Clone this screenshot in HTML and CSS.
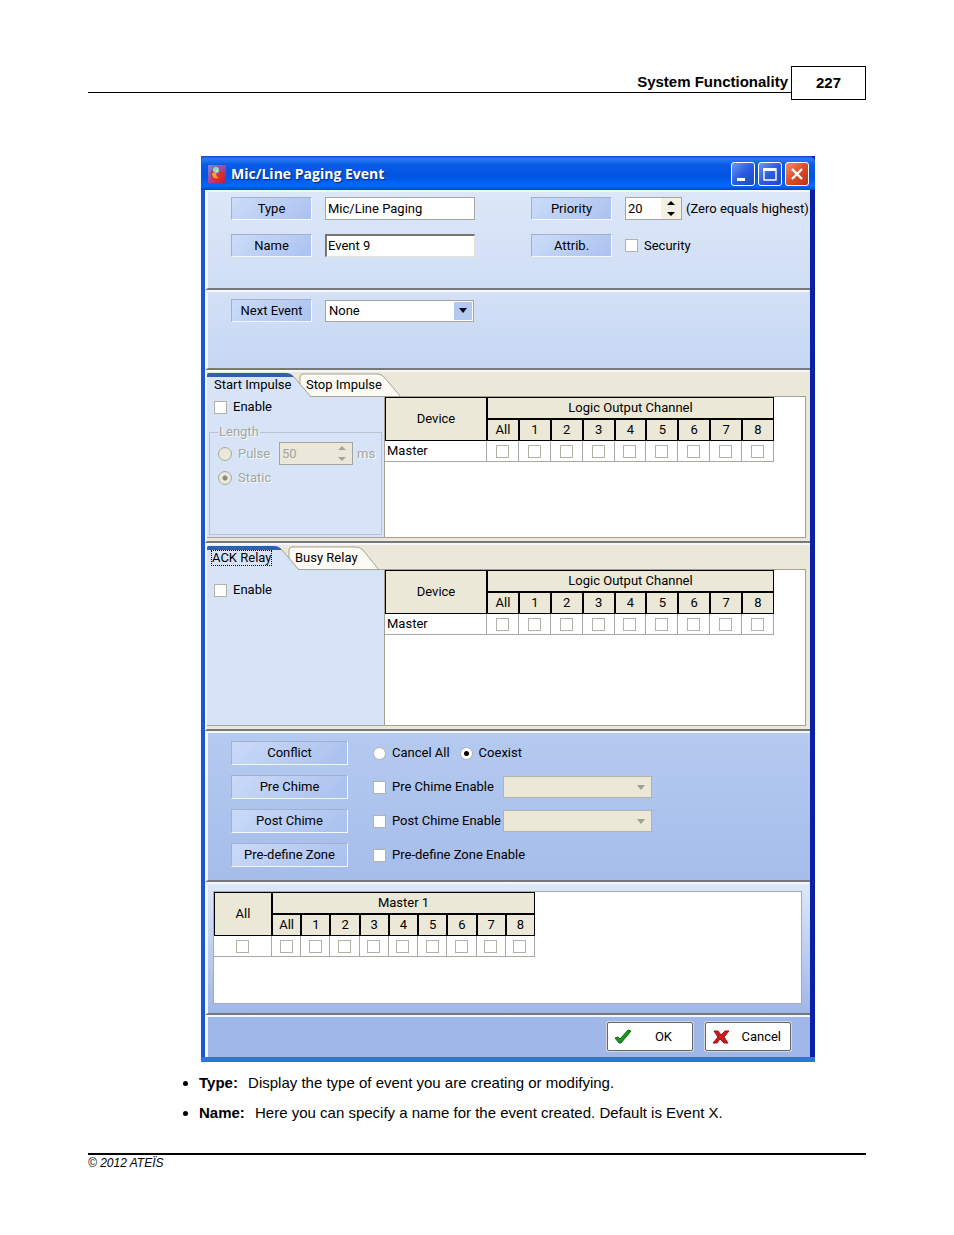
FILE: index.html
```
<!DOCTYPE html>
<html lang="en">
<head>
    <meta charset="UTF-8">
    <title>System Functionality - 227</title>
    <link rel="stylesheet" href="styles.css">
</head>
<body>
    <div class="page">
        <header class="page-header">
            <div class="chapter">System Functionality</div>
            <div class="page-number">227</div>
        </header>

        <main class="content">
            <div class="window">
                <div class="title-bar">
                    <svg class="app-icon" width="18" height="18" viewBox="0 0 18 18">
                        <defs>
                            <linearGradient id="icon-bg" x1="0" y1="0" x2="1" y2="1">
                                <stop offset="0" stop-color="#6a8ee0"/>
                                <stop offset="0.5" stop-color="#a0489a"/>
                                <stop offset="1" stop-color="#c01c20"/>
                            </linearGradient>
                        </defs>
                        <rect width="18" height="18" fill="url(#icon-bg)"/>
                        <path d="M3 5 Q2 16 8 16 Q16 16 16 7 L12 7 Q12 11 9 10 Z" fill="#e8281c"/>
                        <path d="M4 8 Q4 15 11 13 Q8 12 8 8 Z" fill="#f8a030"/>
                        <circle cx="8" cy="5" r="3" fill="#8fd8c0"/>
                        <circle cx="9" cy="6" r="1" fill="#f4e860"/>
                    </svg>
                    <span class="window-title">Mic/Line Paging Event</span>
                    <button class="win-btn" aria-label="Minimize">
                        <svg width="22" height="22" viewBox="0 0 22 22"><rect x="5" y="15" width="8" height="3" fill="#fff"/></svg>
                    </button>
                    <button class="win-btn" aria-label="Maximize">
                        <svg width="22" height="22" viewBox="0 0 22 22"><path d="M5 6 H17 V17 H5 Z" fill="none" stroke="#fff" stroke-width="1.4"/><rect x="4" y="5" width="13" height="3" fill="#fff"/></svg>
                    </button>
                    <button class="win-btn close" aria-label="Close">
                        <svg width="22" height="22" viewBox="0 0 22 22"><path d="M6 6 L16 16 M16 6 L6 16" stroke="#fff" stroke-width="2.4"/></svg>
                    </button>
                </div>

                <!-- Type, name, priority -->
                <section class="section general">
                    <div class="field">
                        <label class="tag" for="type">Type</label>
                        <input class="text" id="type" type="text" value="Mic/Line Paging" readonly>
                    </div>
                    <div class="field">
                        <label class="tag" for="priority">Priority</label>
                        <span class="spinner">
                            <input id="priority" type="text" value="20">
                            <span class="spin-buttons">
                                <button aria-label="Increase"><svg width="8" height="4" viewBox="0 0 8 4"><path d="M0 4 L4 0 L8 4 Z"/></svg></button>
                                <button aria-label="Decrease"><svg width="8" height="4" viewBox="0 0 8 4"><path d="M0 0 L4 4 L8 0 Z"/></svg></button>
                            </span>
                        </span>
                        <span class="hint">(Zero equals highest)</span>
                    </div>
                    <div class="field">
                        <label class="tag" for="name">Name</label>
                        <input class="text sunken" id="name" type="text" value="Event 9">
                    </div>
                    <div class="field">
                        <span class="tag">Attrib.</span>
                        <label class="check"><input type="checkbox">Security</label>
                    </div>
                </section>

                <section class="section next">
                    <div class="field">
                        <label class="tag" for="next-event">Next Event</label>
                        <span class="combo">
                            <select id="next-event"><option>None</option></select>
                            <span class="arrow"><svg width="8" height="5" viewBox="0 0 8 5"><path d="M0 0 L4 5 L8 0 Z"/></svg></span>
                        </span>
                    </div>
                </section>

                <!-- Impulse tabs -->
                <section class="section tabbed">
                    <div class="tabs" role="tablist">
                        <button class="tab active" role="tab" aria-selected="true">
                            <svg width="104" height="24" viewBox="0 0 104 24"><path d="M0 24 V2 Q0 0 2 0 H79 Q84 0 87 4 L104 24 Z" fill="#d7e4f7"/><path d="M0 4 V2 Q0 0 2 0 H79 Q84 0 87 4 Z" fill="#2f5fb0"/><path d="M87 4 L104 24" stroke="#a5a295" fill="none"/></svg>
                            <span>Start Impulse</span>
                        </button>
                        <button class="tab" role="tab" aria-selected="false">
                            <svg width="104" height="24" viewBox="0 0 104 24"><path d="M1 11 V4 Q1 1 4 1 H78 Q82 1 85 4 L102 23 H11 Z" fill="#fbfaf4"/><path d="M1 13 V4 Q1 1 4 1 H78 Q82 1 85 4 L102 24" stroke="#a5a295" fill="none"/></svg>
                            <span>Stop Impulse</span>
                        </button>
                    </div>
                    <div class="tab-body">
                        <div class="options">
                            <label class="check"><input type="checkbox">Enable</label>
                            <fieldset disabled>
                                <legend>Length</legend>
                                <div class="pulse-row">
                                    <label class="check"><input type="radio" name="length">Pulse</label>
                                    <span class="spinner">
                                        <input type="text" value="50" aria-label="Pulse length">
                                        <span class="spin-buttons">
                                            <button aria-label="Increase"><svg width="8" height="4" viewBox="0 0 8 4"><path d="M0 4 L4 0 L8 4 Z"/></svg></button>
                                            <button aria-label="Decrease"><svg width="8" height="4" viewBox="0 0 8 4"><path d="M0 0 L4 4 L8 0 Z"/></svg></button>
                                        </span>
                                    </span>
                                    <span>ms</span>
                                </div>
                                <label class="check"><input type="radio" name="length" checked>Static</label>
                            </fieldset>
                        </div>
                        <div class="grid-pane">
                            <table class="channels">
                                <thead>
                                    <tr><th class="device" rowspan="2">Device</th><th colspan="9">Logic Output Channel</th></tr>
                                    <tr><th>All</th><th>1</th><th>2</th><th>3</th><th>4</th><th>5</th><th>6</th><th>7</th><th>8</th></tr>
                                </thead>
                                <tbody>
                                    <tr>
                                        <td class="row-name">Master</td>
                                        <td><input type="checkbox" aria-label="All"></td>
                                        <td><input type="checkbox" aria-label="1"></td>
                                        <td><input type="checkbox" aria-label="2"></td>
                                        <td><input type="checkbox" aria-label="3"></td>
                                        <td><input type="checkbox" aria-label="4"></td>
                                        <td><input type="checkbox" aria-label="5"></td>
                                        <td><input type="checkbox" aria-label="6"></td>
                                        <td><input type="checkbox" aria-label="7"></td>
                                        <td><input type="checkbox" aria-label="8"></td>
                                    </tr>
                                </tbody>
                            </table>
                        </div>
                    </div>
                </section>

                <!-- Relay tabs -->
                <section class="section tabbed relay">
                    <div class="tabs" role="tablist">
                        <button class="tab active focused" role="tab" aria-selected="true">
                            <svg width="93" height="24" viewBox="0 0 93 24"><path d="M0 24 V2 Q0 0 2 0 H67 Q72 0 75 4 L92 24 Z" fill="#d7e4f7"/><path d="M0 4 V2 Q0 0 2 0 H67 Q72 0 75 4 Z" fill="#2f5fb0"/><path d="M75 4 L92 24" stroke="#a5a295" fill="none"/></svg>
                            <span>ACK Relay</span>
                        </button>
                        <button class="tab" role="tab" aria-selected="false">
                            <svg width="93" height="24" viewBox="0 0 93 24"><path d="M1 11 V4 Q1 1 4 1 H68 Q72 1 75 4 L91 23 H11 Z" fill="#fbfaf4"/><path d="M1 13 V4 Q1 1 4 1 H68 Q72 1 75 4 L91 24" stroke="#a5a295" fill="none"/></svg>
                            <span>Busy Relay</span>
                        </button>
                    </div>
                    <div class="tab-body">
                        <div class="options">
                            <label class="check"><input type="checkbox">Enable</label>
                        </div>
                        <div class="grid-pane">
                            <table class="channels">
                                <thead>
                                    <tr><th class="device" rowspan="2">Device</th><th colspan="9">Logic Output Channel</th></tr>
                                    <tr><th>All</th><th>1</th><th>2</th><th>3</th><th>4</th><th>5</th><th>6</th><th>7</th><th>8</th></tr>
                                </thead>
                                <tbody>
                                    <tr>
                                        <td class="row-name">Master</td>
                                        <td><input type="checkbox" aria-label="All"></td>
                                        <td><input type="checkbox" aria-label="1"></td>
                                        <td><input type="checkbox" aria-label="2"></td>
                                        <td><input type="checkbox" aria-label="3"></td>
                                        <td><input type="checkbox" aria-label="4"></td>
                                        <td><input type="checkbox" aria-label="5"></td>
                                        <td><input type="checkbox" aria-label="6"></td>
                                        <td><input type="checkbox" aria-label="7"></td>
                                        <td><input type="checkbox" aria-label="8"></td>
                                    </tr>
                                </tbody>
                            </table>
                        </div>
                    </div>
                </section>

                <!-- Conflict and chimes -->
                <section class="section chimes">
                    <div class="field">
                        <span class="tag">Conflict</span>
                        <label class="check"><input type="radio" name="conflict">Cancel All</label>
                        <label class="check"><input type="radio" name="conflict" checked>Coexist</label>
                    </div>
                    <div class="field">
                        <span class="tag">Pre Chime</span>
                        <label class="check wide"><input type="checkbox">Pre Chime Enable</label>
                        <span class="combo">
                            <select aria-label="Pre chime" disabled><option></option></select>
                            <span class="arrow"><svg width="8" height="5" viewBox="0 0 8 5"><path d="M0 0 L4 5 L8 0 Z"/></svg></span>
                        </span>
                    </div>
                    <div class="field">
                        <span class="tag">Post Chime</span>
                        <label class="check wide"><input type="checkbox">Post Chime Enable</label>
                        <span class="combo">
                            <select aria-label="Post chime" disabled><option></option></select>
                            <span class="arrow"><svg width="8" height="5" viewBox="0 0 8 5"><path d="M0 0 L4 5 L8 0 Z"/></svg></span>
                        </span>
                    </div>
                    <div class="field">
                        <span class="tag">Pre-define Zone</span>
                        <label class="check"><input type="checkbox">Pre-define Zone Enable</label>
                    </div>
                </section>

                <!-- Zones -->
                <section class="section zones">
                    <div class="grid-pane">
                        <table class="channels small">
                            <thead>
                                <tr><th class="device" rowspan="2">All</th><th colspan="9">Master 1</th></tr>
                                <tr><th>All</th><th>1</th><th>2</th><th>3</th><th>4</th><th>5</th><th>6</th><th>7</th><th>8</th></tr>
                            </thead>
                            <tbody>
                                <tr>
                                    <td><input type="checkbox" aria-label="All zones"></td>
                                    <td><input type="checkbox" aria-label="All"></td>
                                    <td><input type="checkbox" aria-label="1"></td>
                                    <td><input type="checkbox" aria-label="2"></td>
                                    <td><input type="checkbox" aria-label="3"></td>
                                    <td><input type="checkbox" aria-label="4"></td>
                                    <td><input type="checkbox" aria-label="5"></td>
                                    <td><input type="checkbox" aria-label="6"></td>
                                    <td><input type="checkbox" aria-label="7"></td>
                                    <td><input type="checkbox" aria-label="8"></td>
                                </tr>
                            </tbody>
                        </table>
                    </div>
                </section>

                <section class="section actions">
                    <button class="action">
                        <svg width="18" height="16" viewBox="0 0 18 16"><path d="M1 9 L4 8 L6 10 L14 1 L17 2 L7 14 L5 14 Z" fill="#16991c" stroke="#0b6b12"/></svg>
                        <span>OK</span>
                    </button>
                    <button class="action">
                        <svg width="18" height="16" viewBox="0 0 18 16"><path d="M2 2 L6 2 L9 6 L13 2 L17 2 L12 8 L16 14 L12 14 L8 10 L5 14 L1 14 L6 8 Z" fill="#cc1a1e" stroke="#9e1014"/></svg>
                        <span>Cancel</span>
                    </button>
                </section>
            </div>

            <ul class="notes">
                <li><b>Type:</b> Display the type of event you are creating or modifying.</li>
                <li><b>Name:</b> Here you can specify a name for the event created. Default is Event X.</li>
            </ul>
        </main>

        <footer class="page-footer">© 2012 ATEÏS</footer>
    </div>
</body>
</html>
```
FILE: styles.css
```
* {
    box-sizing: border-box;
}
body {
    margin: 0;
    background: #fff;
    color: #000;
    font-family: "Liberation Sans", Arial, sans-serif;
    font-size: 15px;
}
.page {
    padding: 66px 88px;
}

/* Page header */
.page-header {
    display: flex;
    align-items: flex-start;
    font-weight: bold;
    line-height: 18px;
}
.chapter {
    flex: 1;
    padding: 7px 3px 1px;
    border-bottom: 1px solid #000;
    text-align: right;
}
.page-number {
    width: 75px;
    padding: 7px 0;
    border: 1px solid #000;
    text-align: center;
}
.content {
    margin: 56px 51px 0 113px;
}

/* Dialog window */
.window {
    padding: 0 5px 0 4px;
    background: linear-gradient(90deg, #1a56dc 0, #1a56dc 50%, #0a1fa8 100%);
    border-bottom: 5px solid #2f74dc;
    font-family: Roboto, "Liberation Sans", sans-serif;
    font-size: 13px;
    line-height: 16px;
}
.window button,
.window input,
.window select {
    font: inherit;
    color: inherit;
    margin: 0;
}
.title-bar {
    display: flex;
    align-items: center;
    gap: 3px;
    height: 34px;
    margin: 0 -5px 0 -4px;
    padding: 2px 6px 0 7px;
    border-radius: 6px 6px 0 0;
    background: linear-gradient(#0a4cc8 0, #2a7cf4 8%, #0a5ce8 25%, #0054e0 60%, #0468fc 88%, #0048c8 100%);
}
.window-title {
    flex: 1;
    padding-left: 2px;
    color: #fff;
    font-family: "Open Sans", sans-serif;
    font-size: 14px;
    font-weight: bold;
    text-shadow: 1px 1px 1px #0a2a80;
}
.win-btn {
    width: 24px;
    height: 24px;
    padding: 0;
    border: 1px solid #fff;
    border-radius: 3px;
    background: linear-gradient(135deg, #6c98f4, #2a5ce0 50%, #1c48c8);
}
.win-btn.close {
    background: linear-gradient(135deg, #f09070, #dc4c28 50%, #b83410);
}
.win-btn svg {
    display: block;
}
.section {
    border: solid #f4f8fe;
    border-width: 2px 0 2px 3px;
    border-bottom-color: #78787a;
}

/* Fields */
.field {
    display: flex;
    align-items: center;
    gap: 13px;
}
.tag {
    width: 81px;
    height: 23px;
    border: 1px solid;
    border-color: #a3b0cb #f4f8fe #f4f8fe #a3b0cb;
    background: linear-gradient(135deg, #ccdcf8, #abc2ef);
    line-height: 22px;
    text-align: center;
}
.text {
    width: 150px;
    height: 23px;
    padding: 0 2px;
    border: 1px solid #a5a5a0;
    background: #fff;
}
.text.sunken {
    padding: 0 2px 2px 1px;
    border: solid;
    border-width: 2px 1px 1px 2px;
    border-color: #77756c #e6e4d8 #e6e4d8 #77756c;
}
.check {
    display: flex;
    align-items: center;
    gap: 6px;
}
input[type="checkbox"],
input[type="radio"] {
    appearance: none;
    flex: none;
    width: 13px;
    height: 13px;
    border: 1px solid #b4b2a6;
    background: #fff;
}
input[type="radio"] {
    border-radius: 50%;
}
input[type="radio"]:checked {
    background: radial-gradient(circle, #000 0, #000 2px, #fff 3px);
}
.spinner {
    display: flex;
    width: 57px;
    height: 23px;
    border: 1px solid #a5a5a0;
    background: #fff;
}
.spinner input {
    flex: 1;
    min-width: 0;
    padding: 0 2px;
    border: 0;
    background: none;
}
.spin-buttons {
    display: grid;
    width: 20px;
    background: #f3f1e4;
}
.spin-buttons button {
    display: grid;
    place-items: center;
    padding: 0;
    border: 0;
    background: none;
}
.combo {
    display: grid;
    width: 149px;
    height: 22px;
    border: 1px solid #a5a5a0;
    background: #fff;
}
.combo select,
.combo .arrow {
    grid-area: 1 / 1;
}
.combo select {
    appearance: none;
    padding: 0 3px;
    border: 0;
    background: none;
}
.combo .arrow {
    display: grid;
    place-items: center;
    justify-self: end;
    width: 18px;
    margin: 1px;
    background: #b3c8f2;
    pointer-events: none;
}
.combo:has(select:disabled) {
    border-color: #b5b3a5;
    background: #ebe8d8;
    fill: #a09d90;
}
.combo:has(select:disabled) .arrow {
    background: none;
}

/* Sections */
.general {
    display: grid;
    grid-template-columns: 300px 1fr;
    gap: 14px 0;
    padding: 5px 0 31px 23px;
    background: linear-gradient(#dce7f8, #d0def5);
}
.hint {
    margin-left: -9px;
    white-space: nowrap;
}
.next {
    padding: 7px 0 46px 23px;
    background: linear-gradient(#d3e0f6, #c6d7f3);
}
.tabbed {
    padding: 1px 4px 3px 0;
    border-left-width: 2px;
    background: #ebe8d9;
}
.tabs {
    display: flex;
    height: 23px;
}
.tab {
    display: grid;
    align-items: center;
    justify-items: start;
    height: 24px;
    padding: 0;
    border: 0;
    background: none;
}
.tab svg,
.tab span {
    grid-area: 1 / 1;
}
.tab span {
    margin-left: 7px;
}
.tab.active {
    z-index: 1;
    margin-right: -12px;
}
.tab.focused span {
    margin-left: 5px;
    line-height: 14px;
    outline: 1px dotted #000;
}
.tab-body {
    display: flex;
    border: 1px solid #a5a295;
    border-left: 0;
    background: #d7e4f7;
}
.options {
    flex: none;
    width: 177px;
    padding: 2px;
}
.options > .check {
    padding-left: 5px;
}
.tab-body .grid-pane {
    flex: 1;
    min-height: 140px;
    border-left: 1px solid #a5a295;
    background: #fff;
}
.relay .tab-body .grid-pane {
    min-height: 155px;
}
.relay .options {
    padding-top: 12px;
}
fieldset {
    display: grid;
    gap: 5px;
    min-width: 0;
    height: 111px;
    align-content: start;
    margin: 9px 0 0;
    padding: 2px 8px 0;
    border: 1px solid #bcc3cc;
    color: #a5a79f;
    fill: #a5a79f;
    text-shadow: 1px 1px 0 #f4f8fe;
}
legend {
    padding: 0 1px;
}
fieldset input[type="radio"] {
    width: 14px;
    height: 14px;
    border-color: #a5a79f;
    background: #ebe8d9;
}
fieldset input[type="radio"]:checked {
    background: radial-gradient(circle, #8a8a80 0, #8a8a80 2px, #ebe8d9 3px);
}
fieldset .spinner {
    width: 74px;
    background: #ebe8d9;
}
fieldset .spin-buttons {
    background: none;
}
.pulse-row {
    display: grid;
    grid-template-columns: 57px 74px auto;
    align-items: center;
    gap: 4px;
}

/* Channel tables */
.channels {
    table-layout: fixed;
    width: 389px;
    border-spacing: 0;
}
.channels th {
    height: 22px;
    padding: 0;
    border: 1px solid #000;
    background: #ebe8d8;
    font-weight: normal;
}
.channels th.device {
    width: 102px;
}
.channels td {
    height: 21px;
    padding: 0;
    border: solid #a9a9a4;
    border-width: 0 1px 1px 0;
    text-align: center;
}
.channels td.row-name {
    padding-left: 2px;
    text-align: left;
}
.channels td input {
    display: block;
    margin: 0 auto;
}
.channels.small {
    width: 321px;
}
.channels.small th.device {
    width: 58px;
}

.chimes {
    display: grid;
    gap: 10px;
    padding: 8px 0 13px 23px;
    background: linear-gradient(#b4caf0, #a6bdea);
}
.chimes .tag {
    width: 117px;
    height: 24px;
    margin-right: 15px;
    background: linear-gradient(135deg, #cadaf8, #a9c0ee);
}
.chimes .field {
    gap: 10px;
}
.chimes .wide {
    width: 120px;
    white-space: nowrap;
}
.zones {
    padding: 7px 8px 9px 5px;
    background: linear-gradient(#dde8f8, #9fb7e8);
}
.zones .grid-pane {
    min-height: 113px;
    border: 1px solid #a5acb8;
    background: #fff;
}
.actions {
    display: flex;
    justify-content: flex-end;
    gap: 12px;
    padding: 5px 19px 6px 0;
    border-bottom: 0;
    background: #9fb8e9;
}
.action {
    display: flex;
    align-items: center;
    width: 86px;
    height: 29px;
    padding: 0 6px;
    border: 1px solid #60686c;
    border-radius: 2px;
    background: #fff;
    box-shadow: 0 0 0 1px #d5d8d4;
}
.action span {
    flex: 1;
    text-align: right;
    padding-right: 3px;
}
.action:first-child span {
    padding-right: 14px;
}

/* Notes below the dialog */
.notes {
    margin: 11px -20px 0 -20px;
    padding-left: 18px;
    line-height: 20px;
}
.notes li {
    margin-bottom: 10px;
}
.notes b {
    margin-right: 6px;
}
.page-footer {
    margin-top: 30px;
    border-top: 2px solid #000;
    font-size: 12px;
    font-style: italic;
    line-height: 16px;
}
```
